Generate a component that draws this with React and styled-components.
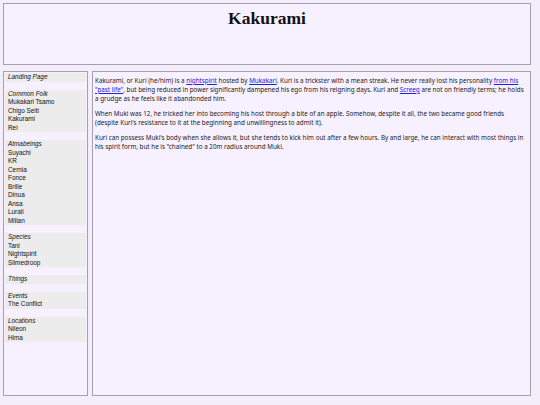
import React from 'react';
import styled, { createGlobalStyle } from 'styled-components';

const GlobalStyle = createGlobalStyle`
  html, body {
    margin: 0;
    padding: 0;
    background: #f3eefa;
  }
`

const nav = [
  { title: 'Landing Page', items: [] },
  { title: 'Common Folk', items: ['Mukakari Tsamo', 'Chigo Seiti', 'Kakurami', 'Rei'] },
  { title: 'Atmabeings', items: ['Suyachi', 'KR', 'Cernia', 'Fonce', 'Brille', 'Dinua', 'Ansa', 'Lurali', 'Millan'] },
  { title: 'Species', items: ['Tani', 'Nightspirit', 'Slimedroop'] },
  { title: 'Things', items: [] },
  { title: 'Events', items: ['The Conflict'] },
  { title: 'Locations', items: ['Nileon', 'Hima'] },
]

const App = () => {
  return (
    <Page>
      <GlobalStyle />
      <Header>
        <Title>Kakurami</Title>
      </Header>
      <Body>
        <Sidebar>
          {nav.map((section) => (
            <Section key={section.title}>
              <SectionTitle>{section.title}</SectionTitle>
              {section.items.map((item) => (
                <NavItem key={item}>{item}</NavItem>
              ))}
            </Section>
          ))}
        </Sidebar>
        <Content>
          <Para>
            Kakurami, or Kuri (he/him) is a <Link href="#">nightspirit</Link> hosted by <Link href="#">Mukakari</Link>. Kuri is a trickster with a mean streak. He never really lost his personality <Link href="#">from his "past life"</Link>, but being reduced in power significantly dampened his ego from his reigning days. Kuri and <Link href="#">Screeg</Link> are not on friendly terms; he holds a grudge as he feels like it abandonded him.
          </Para>
          <Para>
            When Muki was 12, he tricked her into becoming his host through a bite of an apple. Somehow, despite it all, the two became good friends (despite Kuri's resistance to it at the beginning and unwillingness to admit it).
          </Para>
          <Para>
            Kuri can possess Muki's body when she allows it, but she tends to kick him out after a few hours. By and large, he can interact with most things in his spirit form, but he is "chained" to a 20m radius around Muki.
          </Para>
        </Content>
      </Body>
    </Page>
  )
}
export default App;

const Page = styled.div`
  width: 528px;
  padding: 3px;
  display: flex;
  flex-direction: column;
  gap: 6px;
`

const Header = styled.div`
  height: 60px;
  border: 1px solid #a89eb1;
  background: #f7f1ff;
  text-align: center;
`

const Title = styled.h1`
  margin: 3px 0 0;
  font-family: "Liberation Serif", serif;
  font-weight: bold;
  font-size: 17.5px;
  line-height: 22px;
  color: #111;
`

const Body = styled.div`
  display: flex;
  gap: 4px;
  height: 325px;
`

const Sidebar = styled.div`
  width: 81px;
  border: 1px solid #a89eb1;
  background: #f7f1ff;
  padding: 1px;
  display: flex;
  flex-direction: column;
  gap: 8px;
`

const Section = styled.div`
  background: #ececec;
  display: flex;
  flex-direction: column;
`

const NavItem = styled.div`
  font-family: "Liberation Sans", Arial, sans-serif;
  font-size: 6.4px;
  line-height: 8.5px;
  padding-left: 3px;
  color: #111;
`

const SectionTitle = styled(NavItem)`
  font-style: italic;
`

const Content = styled.div`
  flex: 1;
  border: 1px solid #a89eb1;
  background: #f7f1ff;
  padding: 4px 2px;
`

const Para = styled.p`
  margin: 0 0 6px;
  font-family: "Noto Sans", sans-serif;
  font-size: 6.3px;
  line-height: 9px;
  color: #222;
`

const Link = styled.a`
  color: #2020dd;
  text-decoration: underline;
`
